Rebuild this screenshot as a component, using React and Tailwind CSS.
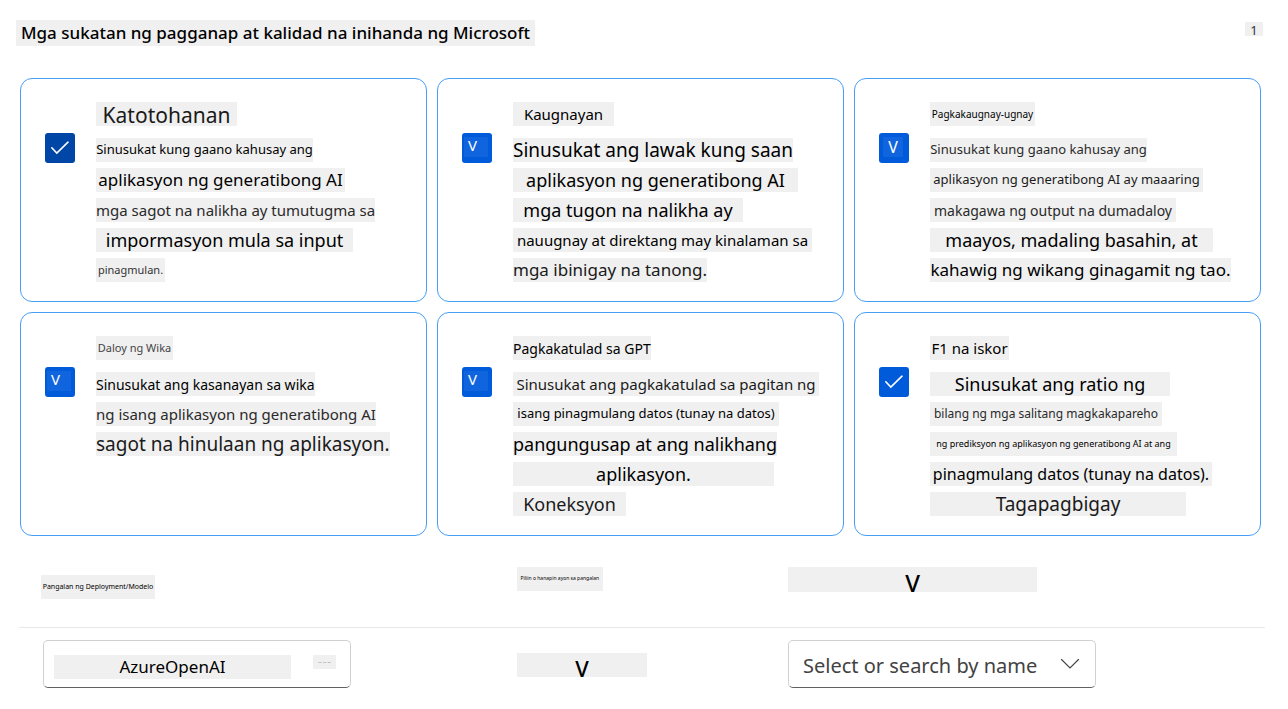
import React from "react";

const metrics = [
  {
    id: "groundedness",
    mark: "check",
    tone: "bg-[#0046a6]",
    title: { text: "Katotohanan", cls: "text-[21px] pt-1 min-w-[141px] text-[#1a1a1a]" },
    lines: [
      { text: "Sinusukat kung gaano kahusay ang", cls: "text-[13px] min-w-[217px]" },
      { text: "aplikasyon ng generatibong AI", cls: "text-[17px] min-w-[249px]" },
      { text: "mga sagot na nalikha ay tumutugma sa", cls: "text-[15px] min-w-[274px] text-[#2a2a2a]" },
      { text: "impormasyon mula sa input", cls: "text-[18px] min-w-[257px]" },
      { text: "pinagmulan.", cls: "text-[11px] min-w-[69px] text-[#333]" },
    ],
  },
  {
    id: "relevance",
    mark: "left",
    tone: "bg-[#005bda]",
    title: { text: "Kaugnayan", cls: "text-[15px] min-w-[101px]" },
    lines: [
      { text: "Sinusukat ang lawak kung saan", cls: "text-[19px] min-w-[277px]" },
      { text: "aplikasyon ng generatibong AI", cls: "text-[18px] min-w-[285px]" },
      { text: "mga tugon na nalikha ay", cls: "text-[18px] min-w-[230px]" },
      { text: "nauugnay at direktang may kinalaman sa", cls: "text-[15px] min-w-[299px]" },
      { text: "mga ibinigay na tanong.", cls: "text-[17px] min-w-[191px] text-[#1a1a1a]" },
    ],
  },
  {
    id: "coherence",
    mark: "center",
    tone: "bg-[#005bda]",
    title: { text: "Pagkakaugnay-ugnay", cls: "text-[10px] min-w-[105px]" },
    lines: [
      { text: "Sinusukat kung gaano kahusay ang", cls: "text-[13px] min-w-[217px] text-[#2a2a2a]" },
      { text: "aplikasyon ng generatibong AI ay maaaring", cls: "text-[13px] min-w-[273px] text-[#1a1a1a]" },
      { text: "makagawa ng output na dumadaloy", cls: "text-[14px] min-w-[246px] text-[#2a2a2a]" },
      { text: "maayos, madaling basahin, at", cls: "text-[18px] min-w-[283px]" },
      { text: "kahawig ng wikang ginagamit ng tao.", cls: "text-[17px] min-w-[301px]" },
    ],
  },
  {
    id: "fluency",
    mark: "left",
    tone: "bg-[#005bda]",
    title: { text: "Daloy ng Wika", cls: "text-[11px] min-w-[77px] text-[#444]" },
    lines: [
      { text: "Sinusukat ang kasanayan sa wika", cls: "text-[14px] min-w-[213px]" },
      { text: "ng isang aplikasyon ng generatibong AI", cls: "text-[15px] min-w-[274px] text-[#2a2a2a]" },
      { text: "sagot na hinulaan ng aplikasyon.", cls: "text-[19px] min-w-[290px] text-[#1a1a1a]" },
    ],
  },
  {
    id: "similarity",
    mark: "left",
    tone: "bg-[#005bda]",
    title: { text: "Pagkakatulad sa GPT", cls: "text-[14px] min-w-[135px]" },
    lines: [
      { text: "Sinusukat ang pagkakatulad sa pagitan ng", cls: "text-[15px] min-w-[306px] text-[#1a1a1a]" },
      { text: "isang pinagmulang datos (tunay na datos)", cls: "text-[13px] min-w-[266px]" },
      { text: "pangungusap at ang nalikhang", cls: "text-[18px] min-w-[264px]" },
      { text: "aplikasyon.", cls: "text-[18px] min-w-[261px]" },
      { text: "Koneksyon", cls: "text-[18px] min-w-[113px] text-[#1a1a1a]" },
    ],
  },
  {
    id: "f1",
    mark: "check",
    tone: "bg-[#005bda]",
    title: { text: "F1 na iskor", cls: "text-[15px] min-w-[79px]" },
    lines: [
      { text: "Sinusukat ang ratio ng", cls: "text-[18px] min-w-[240px]" },
      { text: "bilang ng mga salitang magkakapareho", cls: "text-[12px] min-w-[232px] text-[#2a2a2a]" },
      { text: "ng prediksyon ng aplikasyon ng generatibong AI at ang", cls: "text-[9px] min-w-[247px]" },
      { text: "pinagmulang datos (tunay na datos).", cls: "text-[16px] min-w-[282px]" },
      { text: "Tagapagbigay", cls: "text-[19px] min-w-[256px] text-[#1a1a1a]" },
    ],
  },
];

function Strip({ text, cls }) {
  return (
    <span className={`inline-flex h-6 items-center justify-center whitespace-nowrap bg-[#f0f0f0] ${cls}`}>
      {text}
    </span>
  );
}

function MetricMark({ kind }) {
  if (kind === "check") {
    return (
      <svg viewBox="0 0 30 30" fill="none" stroke="white" strokeWidth="1.6" className="pointer-events-none absolute inset-0 size-full" aria-hidden="true">
        <path d="M6.8 14.8 L11.8 20 L23 9.2" strokeLinecap="round" strokeLinejoin="miter" />
      </svg>
    );
  }
  return (
    <span
      aria-hidden="true"
      className={`pointer-events-none absolute flex h-5 items-center bg-[#1065de] text-white ${
        kind === "left" ? "left-0.5 top-1 w-6 pb-1 pl-1 text-[15px]" : "left-1 top-1 w-5 justify-center text-[16px]"
      }`}
    >
      V
    </span>
  );
}

function MetricCard({ metric }) {
  return (
    <article className="flex min-h-56 items-start gap-[21px] rounded-xl border border-[#479ef5] pb-4 pl-6 pr-2 pt-[23px]">
      <span className="relative mt-[31px] size-[30px] shrink-0">
        <input
          id={metric.id}
          type="checkbox"
          defaultChecked
          className={`block size-[30px] appearance-none rounded-[3px] ${metric.tone}`}
        />
        <MetricMark kind={metric.mark} />
      </span>
      <div className="min-w-0">
        <label htmlFor={metric.id} className="mb-[9px] flex">
          <Strip {...metric.title} />
        </label>
        {metric.lines.map((line) => (
          <p key={line.text} className="flex h-[30px] items-center">
            <Strip {...line} />
          </p>
        ))}
      </div>
    </article>
  );
}

export default function App() {
  return (
    <main className="min-h-screen bg-white pb-5 pt-5 font-['Noto_Sans',sans-serif] text-black">
      <header className="flex items-start justify-between pl-4 pr-[25px]">
        <h1 className="min-w-[519px] whitespace-nowrap bg-[#f0f0f0] text-center text-[17px] font-medium leading-[26px]">
          Mga sukatan ng pagganap at kalidad na inihanda ng Microsoft
        </h1>
        <span className="mt-0.5 h-[14px] w-[18px] bg-[#f0f0f0] text-center text-[13px] leading-[17px] text-[#333]">1</span>
      </header>

      <section className="mt-8 grid grid-cols-3 gap-2.5 pl-5 pr-[27px]">
        {metrics.map((metric) => (
          <MetricCard key={metric.id} metric={metric} />
        ))}
      </section>

      <section className="pl-[19px] pr-[23px] pt-[31px]">
        <div className="grid grid-cols-[475fr_271fr_476fr] items-start border-b border-[#e8e8e8] pb-7 pl-[22px]">
          <label htmlFor="provider" className="mt-2 flex">
            <Strip text="Pangalan ng Deployment/Modelo" cls="text-[7px] min-w-[114px]" />
          </label>
          <span className="flex">
            <Strip text="Piliin o hanapin ayon sa pangalan" cls="text-[5px] min-w-[86px]" />
          </span>
          <label htmlFor="deployment" className="h-[25px] w-[249px] bg-[#f0f0f0] text-center text-[24px] font-medium leading-8">
            V
          </label>
        </div>
        <div className="grid grid-cols-[474fr_271fr_477fr] items-start pl-6 pt-3">
          <div className="flex h-12 w-[308px] items-start gap-[22px] rounded-[5px] border border-[#d1d1d1] border-b-[#616161] px-2.5 pt-3.5">
            <input
              id="provider"
              type="text"
              defaultValue="AzureOpenAI"
              className="h-6 w-[237px] bg-[#f0f0f0] text-center text-[17px] leading-6 outline-none"
            />
            <span className="h-[14px] w-[23px] bg-[#f0f0f0] text-center text-[5px] leading-[14px] text-[#666]">-- -- --</span>
          </div>
          <span className="mt-[13px] h-6 w-[130px] bg-[#f0f0f0] text-center text-[22px] font-medium leading-[30px]">V</span>
          <div className="relative w-[308px]">
            <select
              id="deployment"
              defaultValue=""
              className="h-12 w-full appearance-none rounded-[5px] border border-[#d1d1d1] border-b-[#616161] bg-white pb-0 pl-3.5 pr-12 pt-1 text-[20px] text-[#424242]"
            >
              <option value="">Select or search by name</option>
            </select>
            <svg viewBox="0 0 20 12" fill="none" stroke="#424242" strokeWidth="1.1" className="pointer-events-none absolute right-4 top-[18px] h-3 w-5" aria-hidden="true">
              <path d="M1.5 1.5 L10 10 L18.5 1.5" strokeLinecap="round" />
            </svg>
          </div>
        </div>
      </section>
    </main>
  );
}
